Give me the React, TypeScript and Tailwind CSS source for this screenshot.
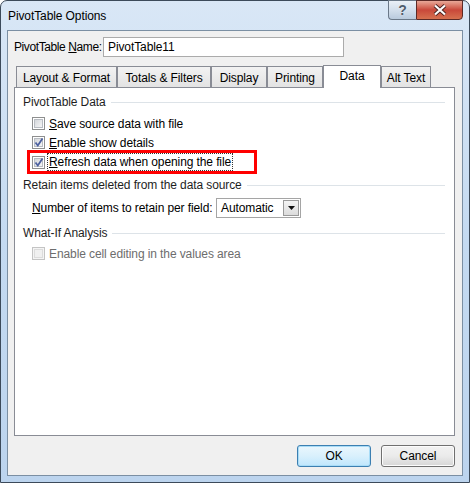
import React from "react";

const font = "font-['Liberation_Sans',Arial,sans-serif]";

const Check = ({ checked, disabled }: { checked?: boolean; disabled?: boolean }) => (
  <span
    className={`flex h-[13px] w-[13px] shrink-0 items-center justify-center border ${
      disabled ? "border-[#c4c4c4] bg-[#f4f4f4]" : "border-[#8e8f8f] bg-white"
    }`}
  >
    <span
      className={`relative h-[9px] w-[9px] border ${
        disabled
          ? "border-[#dcdcdc] bg-[#f0f0f0]"
          : "border-[#b8bcc2] bg-gradient-to-br from-[#d4d7db] to-[#f5f5f5]"
      }`}
    >
      {checked && (
        <svg
          className="absolute left-[-1px] top-[-2px]"
          width="10"
          height="11"
          viewBox="0 0 10 11"
        >
          <path d="M1.5 5.5 L3.8 8.5 L8.5 1.5" fill="none" stroke="#4d61a0" strokeWidth="1.8" />
        </svg>
      )}
    </span>
  </span>
);

const Section = ({ title }: { title: string }) => (
  <div className="flex h-[16px] items-center pl-[8px] pr-[9px]">
    <span className="whitespace-nowrap text-[#1e1e1e]">{title}</span>
    <div className="ml-[5px] h-px flex-1 bg-[#dde3e8]" />
  </div>
);

const tabs = [
  { label: "Layout & Format", w: "w-[101px]" },
  { label: "Totals & Filters", w: "w-[94px]" },
  { label: "Display", w: "w-[56px]" },
  { label: "Printing", w: "w-[56px]" },
  { label: "Data", w: "w-[58px]", active: true },
  { label: "Alt Text", w: "w-[50px]" },
];

export default function App() {
  return (
    <div className={`${font} text-[12px] leading-[14px] tracking-[-0.1px] text-black`}>
      <div className="flex h-[483px] w-[470px] flex-col rounded-t-[7px] border border-[#3c4a5a] bg-gradient-to-b from-[#d9e7f6] via-[#c4daf1] to-[#bcd4ee]">
        {/* title bar */}
        <div className="relative flex h-[29px] items-center pl-[7px]">
          <span className="whitespace-nowrap pt-[1px] text-[12px] text-black">PivotTable Options</span>
          <div className="absolute right-[6px] top-[-1px] flex">
            <div className="flex h-[20px] w-[28px] items-center justify-center rounded-bl-[4px] border border-r-0 border-[#6a7888] bg-gradient-to-b from-[#eaf0f7] via-[#d3dfec] to-[#b9cadd]">
              <span className="text-[14px] font-bold leading-[14px] text-[#4f5d6c] [text-shadow:0_0_1px_#fff]">?</span>
            </div>
            <div className="flex h-[20px] w-[47px] items-center justify-center rounded-br-[4px] border border-[#5c2a26] bg-gradient-to-b from-[#e8a898] via-[#c9483a] to-[#d6704f]">
              <svg width="14" height="12" viewBox="0 0 14 12">
                <path d="M2 1.5 L12 10.5 M12 1.5 L2 10.5" stroke="#4a2320" strokeWidth="4" />
                <path d="M2 1.5 L12 10.5 M12 1.5 L2 10.5" stroke="#ffffff" strokeWidth="2.2" />
              </svg>
            </div>
          </div>
        </div>

        {/* client area */}
        <div className="mx-[6px] mb-[6px] flex flex-1 flex-col border border-[#7b8fa3] bg-[#f0f0f0]">
          <div className="mt-[6px] flex h-[20px] items-center pl-[6px]">
            <span className="w-[89px] shrink-0 whitespace-nowrap tracking-[-0.4px]">
              PivotTable <span className="underline">N</span>ame:
            </span>
            <div className="flex h-[20px] w-[241px] items-center border border-[#ababab] bg-white pl-[4px]">
              PivotTable11
            </div>
          </div>

          <div className="ml-[8px] mt-[8px] flex h-[22px] items-end">
            {tabs.map((t) =>
              t.active ? (
                <div
                  key={t.label}
                  className={`${t.w} relative z-10 -mb-px flex h-[23px] items-start justify-center whitespace-nowrap border border-b-0 border-[#898c95] bg-white pt-[3px]`}
                >
                  {t.label}
                </div>
              ) : (
                <div
                  key={t.label}
                  className={`${t.w} flex h-[21px] items-center justify-center whitespace-nowrap border border-b-0 border-[#898c95] bg-gradient-to-b from-[#f2f2f2] to-[#e3e3e3] pt-[2px]`}
                >
                  {t.label}
                </div>
              )
            )}
          </div>

          <div className="ml-[6px] flex h-[349px] w-[441px] flex-col border border-[#898c95] bg-white pt-[6px]">
            <Section title="PivotTable Data" />
            <div className="ml-[17px] mt-[4px] flex h-[19px] items-center">
              <Check />
              <span className="ml-[4px] whitespace-nowrap">
                <span className="underline">S</span>ave source data with file
              </span>
            </div>
            <div className="ml-[17px] flex h-[19px] items-center">
              <Check checked />
              <span className="ml-[4px] whitespace-nowrap">
                <span className="underline">E</span>nable show details
              </span>
            </div>
            <div className="ml-[12px] -mt-[2px] flex h-[24px] w-[230px] items-center border-[3px] border-[#ff0000] pl-[2px]">
              <Check checked />
              <span className="ml-[2px] whitespace-nowrap border border-dotted border-[#333] px-[1px] leading-[16px]">
                <span className="underline">R</span>efresh data when opening the file
              </span>
            </div>

            <div className="mt-[3px]">
              <Section title="Retain items deleted from the data source" />
            </div>
            <div className="ml-[17px] mt-[5px] flex h-[20px] items-center">
              <span className="w-[184px] shrink-0 whitespace-nowrap">
                <span className="underline">N</span>umber of items to retain per field:
              </span>
              <div className="flex h-[20px] w-[85px] shrink-0 items-center justify-between border border-[#a5a5a5] bg-white pl-[4px]">
                <span>Automatic</span>
                <div className="mr-[1px] flex h-[16px] w-[16px] items-center justify-center border border-[#9a9a9a] bg-gradient-to-b from-[#f4f4f4] to-[#dcdcdc]">
                  <svg width="7" height="4" viewBox="0 0 7 4">
                    <path d="M0 0 H7 L3.5 4 Z" fill="#111" />
                  </svg>
                </div>
              </div>
            </div>

            <div className="mt-[7px]">
              <Section title="What-If Analysis" />
            </div>
            <div className="ml-[17px] mt-[3px] flex h-[19px] items-center">
              <Check disabled />
              <span className="ml-[4px] whitespace-nowrap text-[#6d6d6d]">
                Enable cell editing in the values area
              </span>
            </div>
          </div>

          <div className="mr-[7px] mt-[9px] flex justify-end gap-[10px]">
            <button className="flex h-[22px] w-[74px] items-center justify-center rounded-[3px] border border-[#3c7fb1] bg-gradient-to-b from-[#eaf6fd] via-[#d9f0fc] to-[#bee6fd] shadow-[inset_0_0_0_1px_#a8dcf7]">
              OK
            </button>
            <button className="flex h-[22px] w-[74px] items-center justify-center rounded-[3px] border border-[#707070] bg-gradient-to-b from-[#f2f2f2] via-[#ebebeb] to-[#d6d6d6] shadow-[inset_0_0_0_1px_#fcfcfc]">
              Cancel
            </button>
          </div>
        </div>
      </div>
    </div>
  );
}
